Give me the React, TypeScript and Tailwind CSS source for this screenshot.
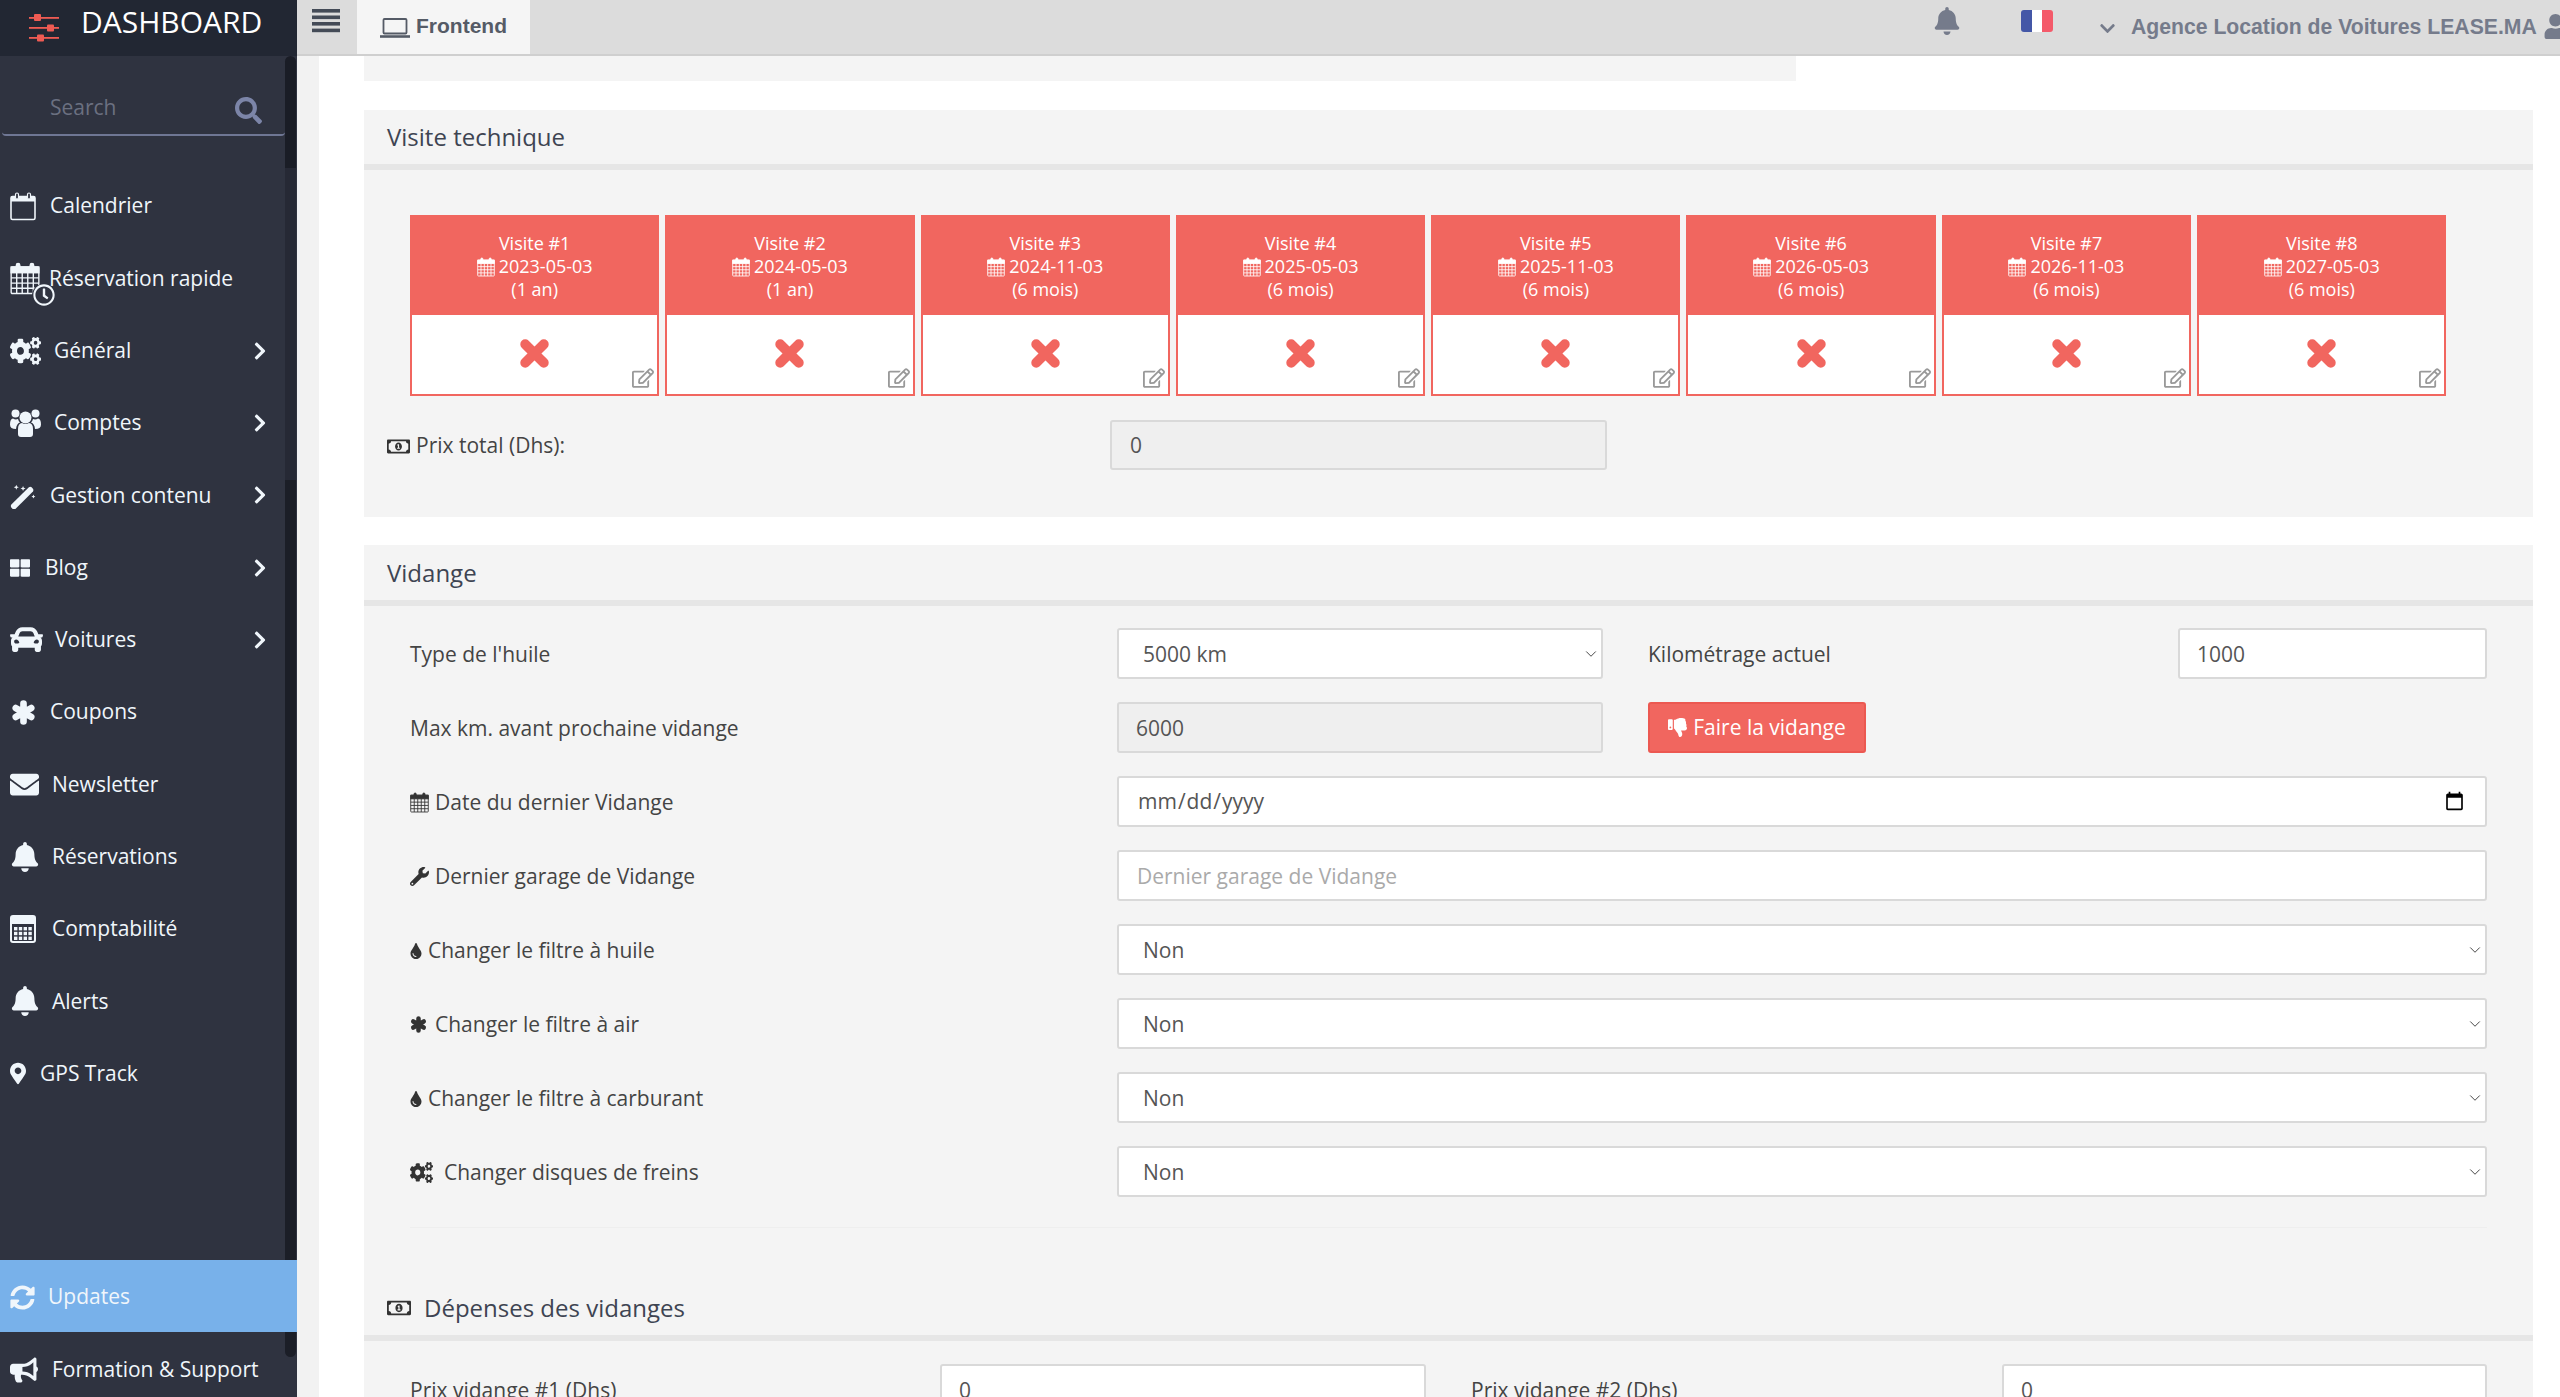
import { ReactNode } from "react";
import { ChevronDown } from "lucide-react";
import {
  FaBell,
  FaBullhorn,
  FaCar,
  FaChevronDown,
  FaChevronRight,
  FaCogs,
  FaEnvelope,
  FaMapMarkerAlt,
  FaRegClock,
  FaRegEdit,
  FaRegMoneyBillAlt,
  FaSearch,
  FaSyncAlt,
  FaThLarge,
  FaThumbsDown,
  FaTint,
  FaUser,
  FaWrench,
} from "react-icons/fa";

type IconProps = { className?: string };

function CalOutline({ className }: IconProps) {
  return (
    <svg viewBox="0 0 26 29" className={className} fill="none" stroke="currentColor">
      <rect x="1" y="4.5" width="24" height="23" rx="1.5" strokeWidth="1.6" />
      <rect x="1" y="4.5" width="24" height="5" fill="currentColor" strokeWidth="0" />
      <rect x="5.5" y="1" width="3" height="6" rx="1.5" fill="#2f3340" strokeWidth="1.2" />
      <rect x="17.5" y="1" width="3" height="6" rx="1.5" fill="#2f3340" strokeWidth="1.2" />
    </svg>
  );
}

function CalGrid({ className }: IconProps) {
  return (
    <svg viewBox="0 0 26 28" className={className} fill="none" stroke="currentColor" strokeWidth="1.2">
      <rect x="1" y="4" width="24" height="23" rx="1" />
      <rect x="1" y="4" width="24" height="5" fill="currentColor" />
      <path d="M1 13.5h24M1 18h24M1 22.5h24M5.8 9v18M10.6 9v18M15.4 9v18M20.2 9v18" />
      <rect x="5.5" y="1" width="3" height="6" rx="1.5" fill="currentColor" />
      <rect x="17.5" y="1" width="3" height="6" rx="1.5" fill="currentColor" />
    </svg>
  );
}

function Asterisk({ className }: IconProps) {
  return (
    <svg viewBox="0 0 24 24" className={className} stroke="currentColor" strokeWidth="6.4" strokeLinecap="round">
      <path d="M12 3.4v17.2M4.6 7.7l14.8 8.6M19.4 7.7L4.6 16.3" />
    </svg>
  );
}

function Cross({ className }: IconProps) {
  return (
    <svg viewBox="0 0 30 30" className={className} stroke="currentColor" strokeWidth="9.5" strokeLinecap="round">
      <path d="M6 6l18 18M24 6L6 24" />
    </svg>
  );
}

function Wand({ className }: IconProps) {
  return (
    <svg viewBox="0 0 30 30" className={className} fill="currentColor">
      <path d="M1.5 25.5L21 6.5q1.5-1.2 3 0l1.5 1.5q1 1.5 0 3L6 30.5q-1.500 1-3 0l-1.500-1.500q-1.200-2 0-3.500z" />
      <path d="M7 3.500l.8 2 2 .8-2 .8-.8 2-.8-2-2-.8 2-.8zM14.500 5l.8 2 2 .8-2 .8-.8 2-.8-2-2-.8 2-.8zM26 14.500l.7 1.500 1.500.7-1.500.7-.7 1.500-.7-1.500-1.500-.7 1.500-.7z" />
    </svg>
  );
}

function Users({ className }: IconProps) {
  return (
    <svg viewBox="0 0 31 28" className={className} fill="currentColor">
      <circle cx="15.500" cy="8.500" r="6" />
      <circle cx="5.500" cy="4.500" r="4" />
      <circle cx="25.500" cy="4.500" r="4" />
      <path d="M8 20q0-5.500 4-6 3.500 2 7 0 4 .5 4 6v5q0 3-3 3H11q-3 0-3-3z" />
      <path d="M0 15.500Q0 10 3 9.500q2.500 1.500 5 .5.500 2 2 3.500-3.500 1-4 6.500-6 0-6-4.500zM31 15.500Q31 10 28 9.500q-2.500 1.500-5 .5-.5 2-2 3.500 3.500 1 4 6.500 6 0 6-4.500z" />
    </svg>
  );
}

function Calculator({ className }: IconProps) {
  const dots = [];
  for (let r = 0; r < 3; r++) {
    for (let c = 0; c < 4; c++) {
      dots.push(<rect key={`${r}-${c}`} x={4 + c * 4.800} y={12 + r * 4.800} width="3.400" height="3.400" />);
    }
  }
  return (
    <svg viewBox="0 0 26 28" className={className} fill="currentColor">
      <rect x="1" y="1" width="24" height="26" rx="2" fill="none" stroke="currentColor" strokeWidth="2" />
      <rect x="1" y="1" width="24" height="8" />
      {dots}
    </svg>
  );
}

function Laptop({ className }: IconProps) {
  return (
    <svg viewBox="0 0 30 20" className={className} fill="none" stroke="currentColor">
      <rect x="3.500" y="1" width="23" height="14.500" rx="1" strokeWidth="1.800" />
      <path d="M0 18.500h30" strokeWidth="2.600" />
    </svg>
  );
}

function Bars() {
  return (
    <svg viewBox="0 0 28 24" className="w-[28px] h-[24px]" fill="#444b57">
      <rect y="0" width="28" height="3.600" />
      <rect y="6.500" width="28" height="3.600" />
      <rect y="13" width="28" height="3.600" />
      <rect y="19.600" width="28" height="3.600" />
    </svg>
  );
}

function Sliders() {
  return (
    <svg viewBox="0 0 30 28" className="w-[30px] h-[28px]" fill="#ef5b53">
      <rect y="3" width="30" height="1.800" />
      <rect x="5" y="0" width="7" height="7" rx="1" />
      <rect y="13" width="30" height="1.800" />
      <rect x="18" y="10.500" width="7" height="7" rx="1" />
      <rect y="23" width="30" height="1.800" />
      <rect x="8" y="20.500" width="7" height="7" rx="1" />
    </svg>
  );
}

type MenuItem = { label: string; icon: ReactNode; slot: string; arrow?: boolean };

const menu: MenuItem[] = [
  { label: "Calendrier", icon: <CalOutline className="w-[26px] h-[29px]" />, slot: "w-[40px]" },
  {
    label: "Réservation rapide",
    icon: (
      <span className="relative block">
        <CalGrid className="w-[30px] h-[33px]" />
        <span className="absolute left-[22px] top-[22px] w-[23px] h-[23px] rounded-full bg-[#2f3340] flex items-center justify-center">
          <FaRegClock className="text-[22px]" />
        </span>
      </span>
    ),
    slot: "w-[39px]",
  },
  { label: "Général", icon: <FaCogs className="w-[31px] h-[28px]" preserveAspectRatio="none" />, slot: "w-[44px]", arrow: true },
  { label: "Comptes", icon: <Users className="w-[31px] h-[28px]" />, slot: "w-[44px]", arrow: true },
  { label: "Gestion contenu", icon: <Wand className="w-[27px] h-[28px]" />, slot: "w-[40px]", arrow: true },
  { label: "Blog", icon: <FaThLarge className="text-[20px]" />, slot: "w-[35px]", arrow: true },
  { label: "Voitures", icon: <FaCar className="text-[33px]" />, slot: "w-[45px]", arrow: true },
  { label: "Coupons", icon: <Asterisk className="w-[25px] h-[25px] ml-[1px]" />, slot: "w-[40px]" },
  { label: "Newsletter", icon: <FaEnvelope className="text-[29px]" />, slot: "w-[42px]" },
  { label: "Réservations", icon: <FaBell className="text-[30px]" />, slot: "w-[42px]" },
  { label: "Comptabilité", icon: <Calculator className="w-[26px] h-[28px]" />, slot: "w-[42px]" },
  { label: "Alerts", icon: <FaBell className="text-[30px]" />, slot: "w-[42px]" },
  { label: "GPS Track", icon: <FaMapMarkerAlt className="w-[16px] h-[25px]" />, slot: "w-[30px]" },
];

function MenuRow({ item }: { item: MenuItem }) {
  return (
    <div className="h-[72.3px] flex items-center pl-[10px] text-[21px] text-[#f0f6fb]">
      <span className={`${item.slot} shrink-0 flex items-center`}>{item.icon}</span>
      <span>{item.label}</span>
      {item.arrow && <FaChevronRight className="text-[20px] absolute left-[250px]" />}
    </div>
  );
}

function Sidebar() {
  return (
    <aside className="w-[297px] shrink-0 h-screen flex flex-col bg-[#2f3340] relative overflow-hidden">
      <div className="h-[56px] shrink-0 bg-[#222733] flex items-center pl-[29px] gap-[22px] text-[30px] text-white">
        <Sliders />
        <span className="pb-[14px]">DASHBOARD</span>
      </div>
      <div className="absolute left-[285px] top-[56px] w-[11px] h-[1301px] flex flex-col">
        <div className="h-[112px] rounded-t-md bg-[#1a1d26]" />
        <div className="h-[312px] bg-[#262935]" />
        <div className="flex-1 rounded-b-md bg-[#1b1e27]" />
      </div>
      <div className="relative mx-[2px] w-[283px] h-[80px] shrink-0 border-b-2 border-[#6f7794] rounded-b flex items-center text-[21px] text-[#6b7080]">
        <span className="ml-[48px] mt-[26px]">Search</span>
        <FaSearch className="absolute left-[233px] top-[41px] text-[27px] text-[#7c85a8]" />
      </div>
      <div className="shrink-0 mt-[34px] relative">
        {menu.map((m) => (
          <MenuRow key={m.label} item={m} />
        ))}
      </div>
      <div className="mt-auto relative">
        <div className="h-[72px] bg-[#78b1ea] flex items-center pl-[10px] pt-[2px] text-[21px] text-[#f0f6fb]">
          <span className="w-[38px] shrink-0">
            <FaSyncAlt className="text-[25px]" />
          </span>
          <span>Updates</span>
        </div>
        <div className="h-[65px] pt-[10px] flex items-center pl-[10px] text-[21px] text-[#f0f6fb]">
          <span className="w-[42px] shrink-0">
            <FaBullhorn className="text-[28px]" />
          </span>
          <span>Formation &amp; Support</span>
        </div>
      </div>
    </aside>
  );
}

function Topbar() {
  return (
    <header className="h-[56px] shrink-0 bg-[#dcdcdc] border-b-2 border-[#cfcfcf] flex items-start font-['Liberation_Sans',sans-serif] font-bold text-[21px] text-[#757b8b] whitespace-nowrap">
      <div className="w-[60px] shrink-0 pl-[15px] pt-[9px]">
        <Bars />
      </div>
      <div className="h-[54px] w-[173px] shrink-0 bg-[#f5f5f5] flex items-center pl-[23px] gap-[6px] text-[#555b66]">
        <Laptop className="w-[30px] h-[20px] mt-[1px]" />
        <span className="pb-[2px]">Frontend</span>
      </div>
      <FaBell className="ml-[1403px] mt-[7px] text-[28px] shrink-0" />
      <div className="ml-[60px] mt-[10px] w-[32px] h-[22px] rounded-[3px] overflow-hidden flex shrink-0">
        <span className="flex-1 bg-[#4457a7]" />
        <span className="flex-1 bg-white" />
        <span className="flex-1 bg-[#f45a6a]" />
      </div>
      <FaChevronDown className="ml-[46px] mt-[20px] text-[17px] shrink-0" />
      <span className="ml-[15px] mt-[11px] text-[21.2px]">Agence Location de Voitures LEASE.MA</span>
      <FaUser className="ml-[6px] mt-[14px] text-[25px] shrink-0" />
    </header>
  );
}

function Card({ n, date, period }: { n: number; date: string; period: string }) {
  return (
    <div className="w-[249.3px] h-[181px] shrink-0 border-2 border-[#f1665f] bg-white relative flex flex-col">
      <div className="h-[98px] bg-[#f1665f] text-white text-[18px] leading-[23px] text-center pt-[15px]">
        <div>Visite #{n}</div>
        <div className="flex items-center justify-center gap-[4px]">
          <CalGrid className="w-[18px] h-[20px]" />
          {date}
        </div>
        <div>{period}</div>
      </div>
      <div className="flex-1 flex items-start justify-center pt-[23px]">
        <Cross className="w-[31px] h-[31px] text-[#f1665f]" />
      </div>
      <FaRegEdit className="absolute right-[3px] bottom-[5px] text-[22px] text-[#999]" />
    </div>
  );
}

const field =
  "h-[51px] border-2 border-[#d9d9d9] rounded-[3px] text-[21px] text-[#555] outline-none";

function Input({ value, w, disabled }: { value: string; w: string; disabled?: boolean }) {
  return (
    <input
      readOnly
      value={value}
      className={`${field} ${w} ${disabled ? "bg-[#efefef] px-[17px]" : "bg-white px-[17px]"}`}
    />
  );
}

function Select({ value, w }: { value: string; w: string }) {
  return (
    <div className={`relative ${w}`}>
      <select className={`${field} bg-white w-full appearance-none pl-[24px] pt-[3px]`} defaultValue={value}>
        <option>{value}</option>
      </select>
      <ChevronDown className="absolute right-[3px] top-[17px] w-[18px] h-[18px] text-[#444] pointer-events-none" strokeWidth={1.300} />
    </div>
  );
}

function Label({ icon, children, w }: { icon?: ReactNode; children: ReactNode; w: string }) {
  return (
    <div className={`${w} shrink-0 flex items-center gap-[6px] pt-[2px] text-[21px] text-[#444]`}>
      {icon}
      <span>{children}</span>
    </div>
  );
}

function Row({ icon, label, children }: { icon?: ReactNode; label: string; children: ReactNode }) {
  return (
    <div className="flex items-center h-[51px] mb-[23px]">
      <Label icon={icon} w="w-[707px]">
        {label}
      </Label>
      {children}
    </div>
  );
}

const visits = [
  ["2023-05-03", "(1 an)"],
  ["2024-05-03", "(1 an)"],
  ["2024-11-03", "(6 mois)"],
  ["2025-05-03", "(6 mois)"],
  ["2025-11-03", "(6 mois)"],
  ["2026-05-03", "(6 mois)"],
  ["2026-11-03", "(6 mois)"],
  ["2027-05-03", "(6 mois)"],
];

export default function App() {
  return (
    <div className="h-screen w-full flex overflow-hidden bg-white font-['Open_Sans',sans-serif]">
      <Sidebar />
      <div className="flex-1 min-w-0 flex flex-col">
        <Topbar />
        <main className="flex-1 min-h-0 overflow-hidden pl-[22px] bg-[#f2f2f2]">
          <div className="h-full bg-white pl-[45px] pr-[27px]">
            <div className="h-[25px] w-[1432px] bg-[#f4f4f4]" />

            <section className="mt-[29px] bg-[#f4f4f4] h-[407px]">
              <h2 className="h-[54px] flex items-center pl-[23px] text-[24px] text-[#3e4452]">Visite technique</h2>
              <div className="h-[6px] bg-[#e6e6e6]" />
              <div className="flex gap-[6px] ml-[46px] mt-[45px]">
                {visits.map((v, i) => (
                  <Card key={i} n={i + 1} date={v[0]} period={v[1]} />
                ))}
              </div>
              <div className="flex items-center pl-[23px] mt-[24px]">
                <Label w="w-[723px]" icon={<FaRegMoneyBillAlt className="text-[23px] text-[#333]" />}>
                  Prix total (Dhs):
                </Label>
                <input
                  readOnly
                  value="0"
                  className="h-[50px] w-[497px] border-2 border-[#d9d9d9] rounded-[3px] bg-[#efefef] text-[21px] text-[#555] px-[18px] outline-none"
                />
              </div>
            </section>

            <section className="mt-[28px] bg-[#f4f4f4] pb-[100px]">
              <h2 className="h-[55px] flex items-center pl-[23px] text-[24px] text-[#3e4452]">Vidange</h2>
              <div className="h-[6px] bg-[#e6e6e6]" />
              <div className="pt-[22px] px-[46px]">
                <Row label="Type de l'huile">
                  <Select value="5000 km" w="w-[486px]" />
                  <Label w="w-[530px] ml-[45px]">Kilométrage actuel</Label>
                  <Input value="1000" w="w-[309px]" />
                </Row>
                <Row label="Max km. avant prochaine vidange">
                  <Input value="6000" w="w-[486px]" disabled />
                  <button className="ml-[45px] h-[51px] w-[218px] rounded-[3px] border-2 border-[#ec5851] bg-[#f1665f] text-[21px] text-white flex items-center justify-center gap-[6px]">
                    <FaThumbsDown className="text-[19px]" />
                    Faire la vidange
                  </button>
                </Row>
                <Row label="Date du dernier Vidange" icon={<CalGrid className="w-[19px] h-[21px] text-[#333]" />}>
                  <input type="date" className={`${field} bg-white flex-1 px-[18px]`} />
                </Row>
                <Row label="Dernier garage de Vidange" icon={<FaWrench className="text-[19px] text-[#333]" />}>
                  <input placeholder="Dernier garage de Vidange" className={`${field} bg-white flex-1 px-[18px] placeholder:text-[#aaa]`} />
                </Row>
                <Row label="Changer le filtre à huile" icon={<FaTint className="w-[12px] h-[16px] text-[#333]" />}>
                  <Select value="Non" w="flex-1" />
                </Row>
                <Row label="Changer le filtre à air" icon={<Asterisk className="w-[17px] h-[17px] text-[#333] mr-[2px]" />}>
                  <Select value="Non" w="flex-1" />
                </Row>
                <Row label="Changer le filtre à carburant" icon={<FaTint className="w-[12px] h-[16px] text-[#333]" />}>
                  <Select value="Non" w="flex-1" />
                </Row>
                <Row label="Changer disques de freins" icon={<FaCogs className="w-[23px] h-[21px] text-[#333] mr-[5px]" preserveAspectRatio="none" />}>
                  <Select value="Non" w="flex-1" />
                </Row>
                <div className="mt-[30px] h-px bg-[#eeeeee]" />
              </div>
              <div className="h-[107px] flex items-center pl-[23px] pt-[52px] text-[24px] text-[#3e4452] gap-[13px]">
                <FaRegMoneyBillAlt className="text-[24px] text-[#333]" />
                <span>Dépenses des vidanges</span>
              </div>
              <div className="h-[6px] bg-[#e6e6e6]" />
              <div className="pt-[23px] px-[46px] flex items-center">
                <Label w="w-[530px]">Prix vidange #1 (Dhs)</Label>
                <Input value="0" w="w-[486px]" />
                <Label w="w-[531px] ml-[45px]">Prix vidange #2 (Dhs)</Label>
                <Input value="0" w="w-[485px]" />
              </div>
            </section>
          </div>
        </main>
      </div>
    </div>
  );
}
